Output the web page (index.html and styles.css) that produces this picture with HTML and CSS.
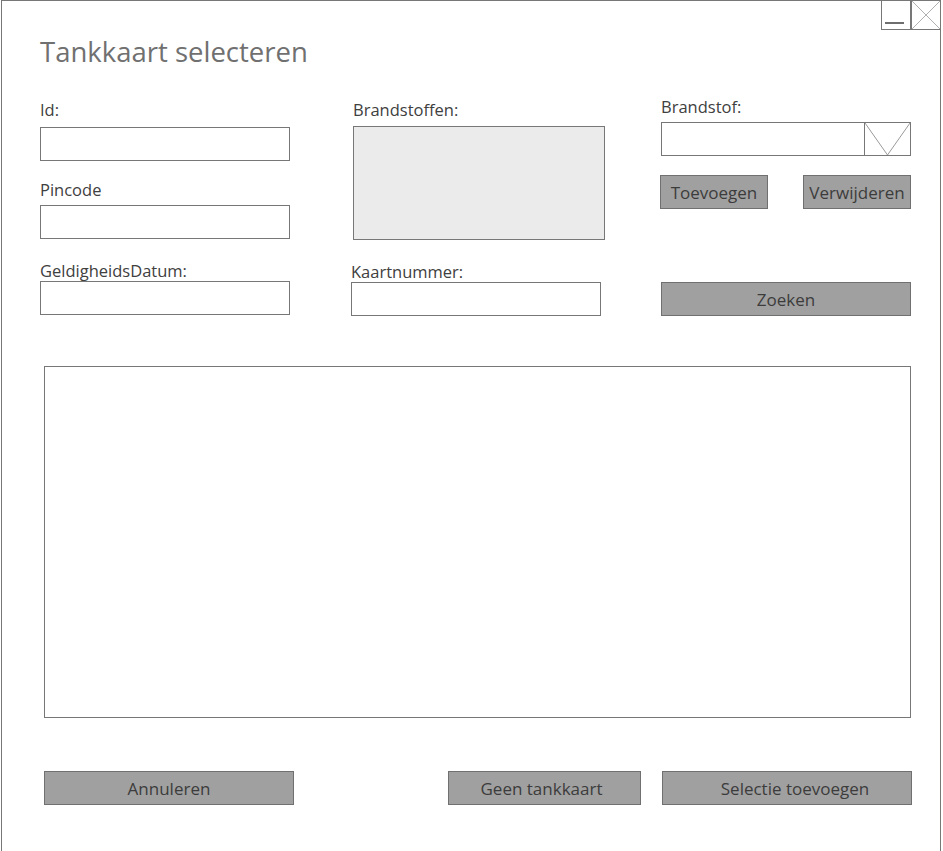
FILE: index.html
```html
<!DOCTYPE html>
<html lang="nl">
<head>
<meta charset="utf-8">
<title>Tankkaart selecteren</title>
<link rel="stylesheet" href="styles.css">
</head>
<body>
<div class="window">
  <div class="chrome">
    <div class="ctrl ctrl-min"><span class="dash"></span></div>
    <div class="ctrl ctrl-close">
      <svg class="x-icon" width="28" height="28" viewBox="0 0 28 28"><path d="M0 0L28 28M28 0L0 28" fill="none" stroke="#b0b0b0" stroke-width="1"/></svg>
    </div>
  </div>
  <h1 class="title">Tankkaart selecteren</h1>
  <div class="form">
    <div class="col col1">
      <div class="label">Id:</div>
      <div class="field mt7"></div>
      <div class="label mt19">Pincode</div>
      <div class="field mt5"></div>
      <div class="label mt22">GeldigheidsDatum:</div>
      <div class="field"></div>
    </div>
    <div class="col col2">
      <div class="label shift2">Brandstoffen:</div>
      <div class="listbox shift2"></div>
      <div class="label mt22">Kaartnummer:</div>
      <div class="field"></div>
    </div>
    <div class="col col3">
      <div class="label up3">Brandstof:</div>
      <div class="combo mt5">
        <div class="combo-arrow">
          <svg width="45" height="32" viewBox="0 0 45 32"><path d="M0 0L22.5 32L45 0" fill="none" stroke="#9a9a9a" stroke-width="1"/></svg>
        </div>
      </div>
      <div class="btn-row">
        <div class="btn btn-small btn-left">Toevoegen</div>
        <div class="btn btn-small">Verwijderen</div>
      </div>
      <div class="btn btn-search">Zoeken</div>
    </div>
  </div>
  <div class="results"></div>
  <div class="footer">
    <div class="btn btn-cancel">Annuleren</div>
    <div class="btn btn-none">Geen tankkaart</div>
    <div class="btn btn-add">Selectie toevoegen</div>
  </div>
</div>
</body>
</html>
```

FILE: styles.css
```css
html, body {
  margin: 0;
  padding: 0;
  background: #ffffff;
}

body {
  font-family: "Open Sans", "Noto Sans", sans-serif;
  color: #404040;
  overflow: hidden;
}

.window {
  box-sizing: border-box;
  width: 940px;
  min-height: 851px;
  margin-left: 1px;
  border: 1px solid #777777;
  border-bottom: none;
  background: #ffffff;
}

.chrome {
  display: flex;
  justify-content: flex-end;
  height: 29px;
}

.ctrl {
  box-sizing: border-box;
  height: 29px;
  border-bottom: 1px solid #777777;
}

.ctrl-min {
  width: 29px;
  border-left: 1px solid #777777;
}

.dash {
  display: block;
  width: 19px;
  height: 2px;
  margin: 21px 0 0 3px;
  background: #6e6e6e;
}

.ctrl-close {
  width: 30px;
  border-left: 2px solid #777777;
}

.x-icon {
  display: block;
}

.title {
  margin: 5px 0 0 38px;
  font-size: 27.5px;
  line-height: 34px;
  font-weight: 400;
  color: #707070;
}

.form {
  display: flex;
  margin-top: 31px;
  padding-left: 38px;
}

.col {
  display: flex;
  flex-direction: column;
  width: 250px;
}

.col2 {
  margin-left: 61px;
}

.col3 {
  margin-left: 60px;
}

.label {
  font-size: 16.5px;
  line-height: 20px;
  height: 20px;
  color: #404040;
  white-space: nowrap;
}

.mt5 { margin-top: 5px; }
.mt7 { margin-top: 7px; }
.mt19 { margin-top: 19px; }
.mt22 { margin-top: 22px; }
.up3 { margin-top: -3px; }
.shift2 { margin-left: 2px; }

.field {
  box-sizing: border-box;
  width: 250px;
  height: 34px;
  border: 1px solid #777777;
  background: #ffffff;
}

.listbox {
  box-sizing: border-box;
  width: 252px;
  height: 114px;
  margin-top: 6px;
  border: 1px solid #777777;
  background: #ebebeb;
}

.combo {
  box-sizing: border-box;
  display: flex;
  justify-content: flex-end;
  width: 250px;
  height: 34px;
  border: 1px solid #777777;
  background: #ffffff;
}

.combo-arrow {
  box-sizing: border-box;
  width: 46px;
  height: 32px;
  border-left: 1px solid #777777;
}

.combo-arrow svg {
  display: block;
}

.btn {
  box-sizing: border-box;
  display: flex;
  align-items: center;
  justify-content: center;
  height: 34px;
  border: 1px solid #707070;
  background: #a0a0a0;
  color: #3c3c3c;
  font-size: 17px;
  white-space: nowrap;
}

.btn-row {
  display: flex;
  justify-content: space-between;
  margin-top: 19px;
}

.btn-small {
  width: 108px;
}

.btn-left {
  margin-left: -1px;
}

.btn-search {
  width: 250px;
  margin-top: 73px;
}

.results {
  box-sizing: border-box;
  width: 867px;
  height: 352px;
  margin: 50px 0 0 42px;
  border: 1px solid #777777;
  background: #ffffff;
}

.footer {
  display: flex;
  margin-top: 53px;
  padding: 0 28px 0 42px;
}

.btn-cancel {
  width: 250px;
}

.btn-none {
  width: 193px;
  margin-left: auto;
  padding-right: 6px;
}

.btn-add {
  width: 250px;
  margin-left: 21px;
  padding-left: 16px;
}
```
